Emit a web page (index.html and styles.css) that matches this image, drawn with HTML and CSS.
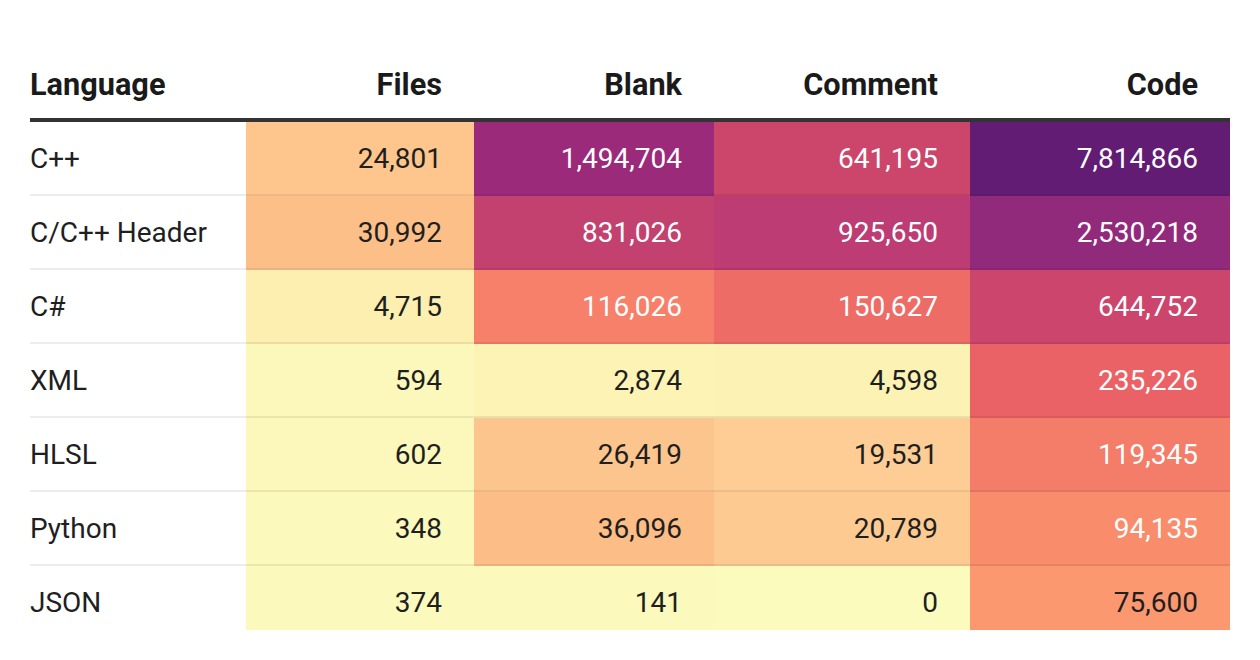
FILE: index.html
```html
<!DOCTYPE html>
<html lang="en">
<head>
<meta charset="utf-8">
<title>Lines of code by language</title>
<link rel="stylesheet" href="styles.css">
</head>
<body>
<div class="frame">
  <table class="loc">
    <colgroup>
      <col class="c-lang"><col class="c-files"><col class="c-blank"><col class="c-comment"><col class="c-code">
    </colgroup>
    <thead>
      <tr>
        <th class="lang">Language</th>
        <th>Files</th>
        <th>Blank</th>
        <th>Comment</th>
        <th>Code</th>
      </tr>
    </thead>
    <tbody>
      <tr>
        <td class="lang">C++</td>
        <td class="h-c1">24,801</td>
        <td class="h-b1 light">1,494,704</td>
        <td class="h-m1 light">641,195</td>
        <td class="h-k1 light">7,814,866</td>
      </tr>
      <tr>
        <td class="lang">C/C++ Header</td>
        <td class="h-c2">30,992</td>
        <td class="h-b2 light">831,026</td>
        <td class="h-m2 light">925,650</td>
        <td class="h-k2 light">2,530,218</td>
      </tr>
      <tr>
        <td class="lang">C#</td>
        <td class="h-c3">4,715</td>
        <td class="h-b3 light">116,026</td>
        <td class="h-m3 light">150,627</td>
        <td class="h-k3 light">644,752</td>
      </tr>
      <tr>
        <td class="lang">XML</td>
        <td class="h-c4">594</td>
        <td class="h-b4">2,874</td>
        <td class="h-m4">4,598</td>
        <td class="h-k4 light">235,226</td>
      </tr>
      <tr>
        <td class="lang">HLSL</td>
        <td class="h-c5">602</td>
        <td class="h-b5">26,419</td>
        <td class="h-m5">19,531</td>
        <td class="h-k5 light">119,345</td>
      </tr>
      <tr>
        <td class="lang">Python</td>
        <td class="h-c6">348</td>
        <td class="h-b6">36,096</td>
        <td class="h-m6">20,789</td>
        <td class="h-k6 light">94,135</td>
      </tr>
      <tr>
        <td class="lang">JSON</td>
        <td class="h-c7">374</td>
        <td class="h-b7">141</td>
        <td class="h-m7">0</td>
        <td class="h-k7">75,600</td>
      </tr>
    </tbody>
  </table>
</div>
</body>
</html>
```

FILE: styles.css
```css
html, body {
  margin: 0;
  padding: 0;
  background: #ffffff;
}

body {
  font-family: Roboto, "Liberation Sans", sans-serif;
  color: #1f1f1f;
}

.frame {
  margin: 48px 0 0 30px;
  width: 1200px;
  height: 582px;
  overflow: hidden;
}

.loc {
  width: 1200px;
  border-collapse: separate;
  border-spacing: 0;
  table-layout: fixed;
}

.c-lang { width: 216px; }
.c-files { width: 228px; }
.c-blank { width: 240px; }
.c-comment { width: 256px; }
.c-code { width: 260px; }

.loc th {
  height: 68px;
  padding: 2px 32px 0 0;
  font-size: 30.7px;
  font-weight: 700;
  color: #1a1a1a;
  text-align: right;
  vertical-align: middle;
  border-bottom: 4px solid #333333;
}

.loc td {
  height: 72px;
  padding: 0 32px 0 0;
  font-size: 28px;
  font-weight: 400;
  text-align: right;
  vertical-align: middle;
  border-bottom: 2px solid rgba(0, 0, 0, 0.07);
  white-space: nowrap;
}

.loc th.lang,
.loc td.lang {
  text-align: left;
  padding-right: 0;
}

.loc td.light { color: #ffffff; }

/* heat colours: files */
.h-c1 { background: #fec68d; }
.h-c2 { background: #fdbf88; }
.h-c3 { background: #fcefb0; }
.h-c4 { background: #fcf8bb; }
.h-c5 { background: #fcf8bb; }
.h-c6 { background: #fbf9bb; }
.h-c7 { background: #fbfabc; }

/* blank */
.h-b1 { background: #9b2a7b; }
.h-b2 { background: #c3416f; }
.h-b3 { background: #f7806a; }
.h-b4 { background: #fcf3b4; }
.h-b5 { background: #fdc58e; }
.h-b6 { background: #fcbd86; }
.h-b7 { background: #fbfabc; }

/* comment */
.h-m1 { background: #cc466b; }
.h-m2 { background: #bc3c73; }
.h-m3 { background: #ed6c66; }
.h-m4 { background: #fcf2b3; }
.h-m5 { background: #fdcd95; }
.h-m6 { background: #fdcb92; }
.h-m7 { background: #fbfbbd; }

/* code */
.h-k1 { background: #621c73; }
.h-k2 { background: #922a7b; }
.h-k3 { background: #cb456c; }
.h-k4 { background: #ea6265; }
.h-k5 { background: #f37d68; }
.h-k6 { background: #f98c6b; }
.h-k7 { background: #fc9870; }
```
